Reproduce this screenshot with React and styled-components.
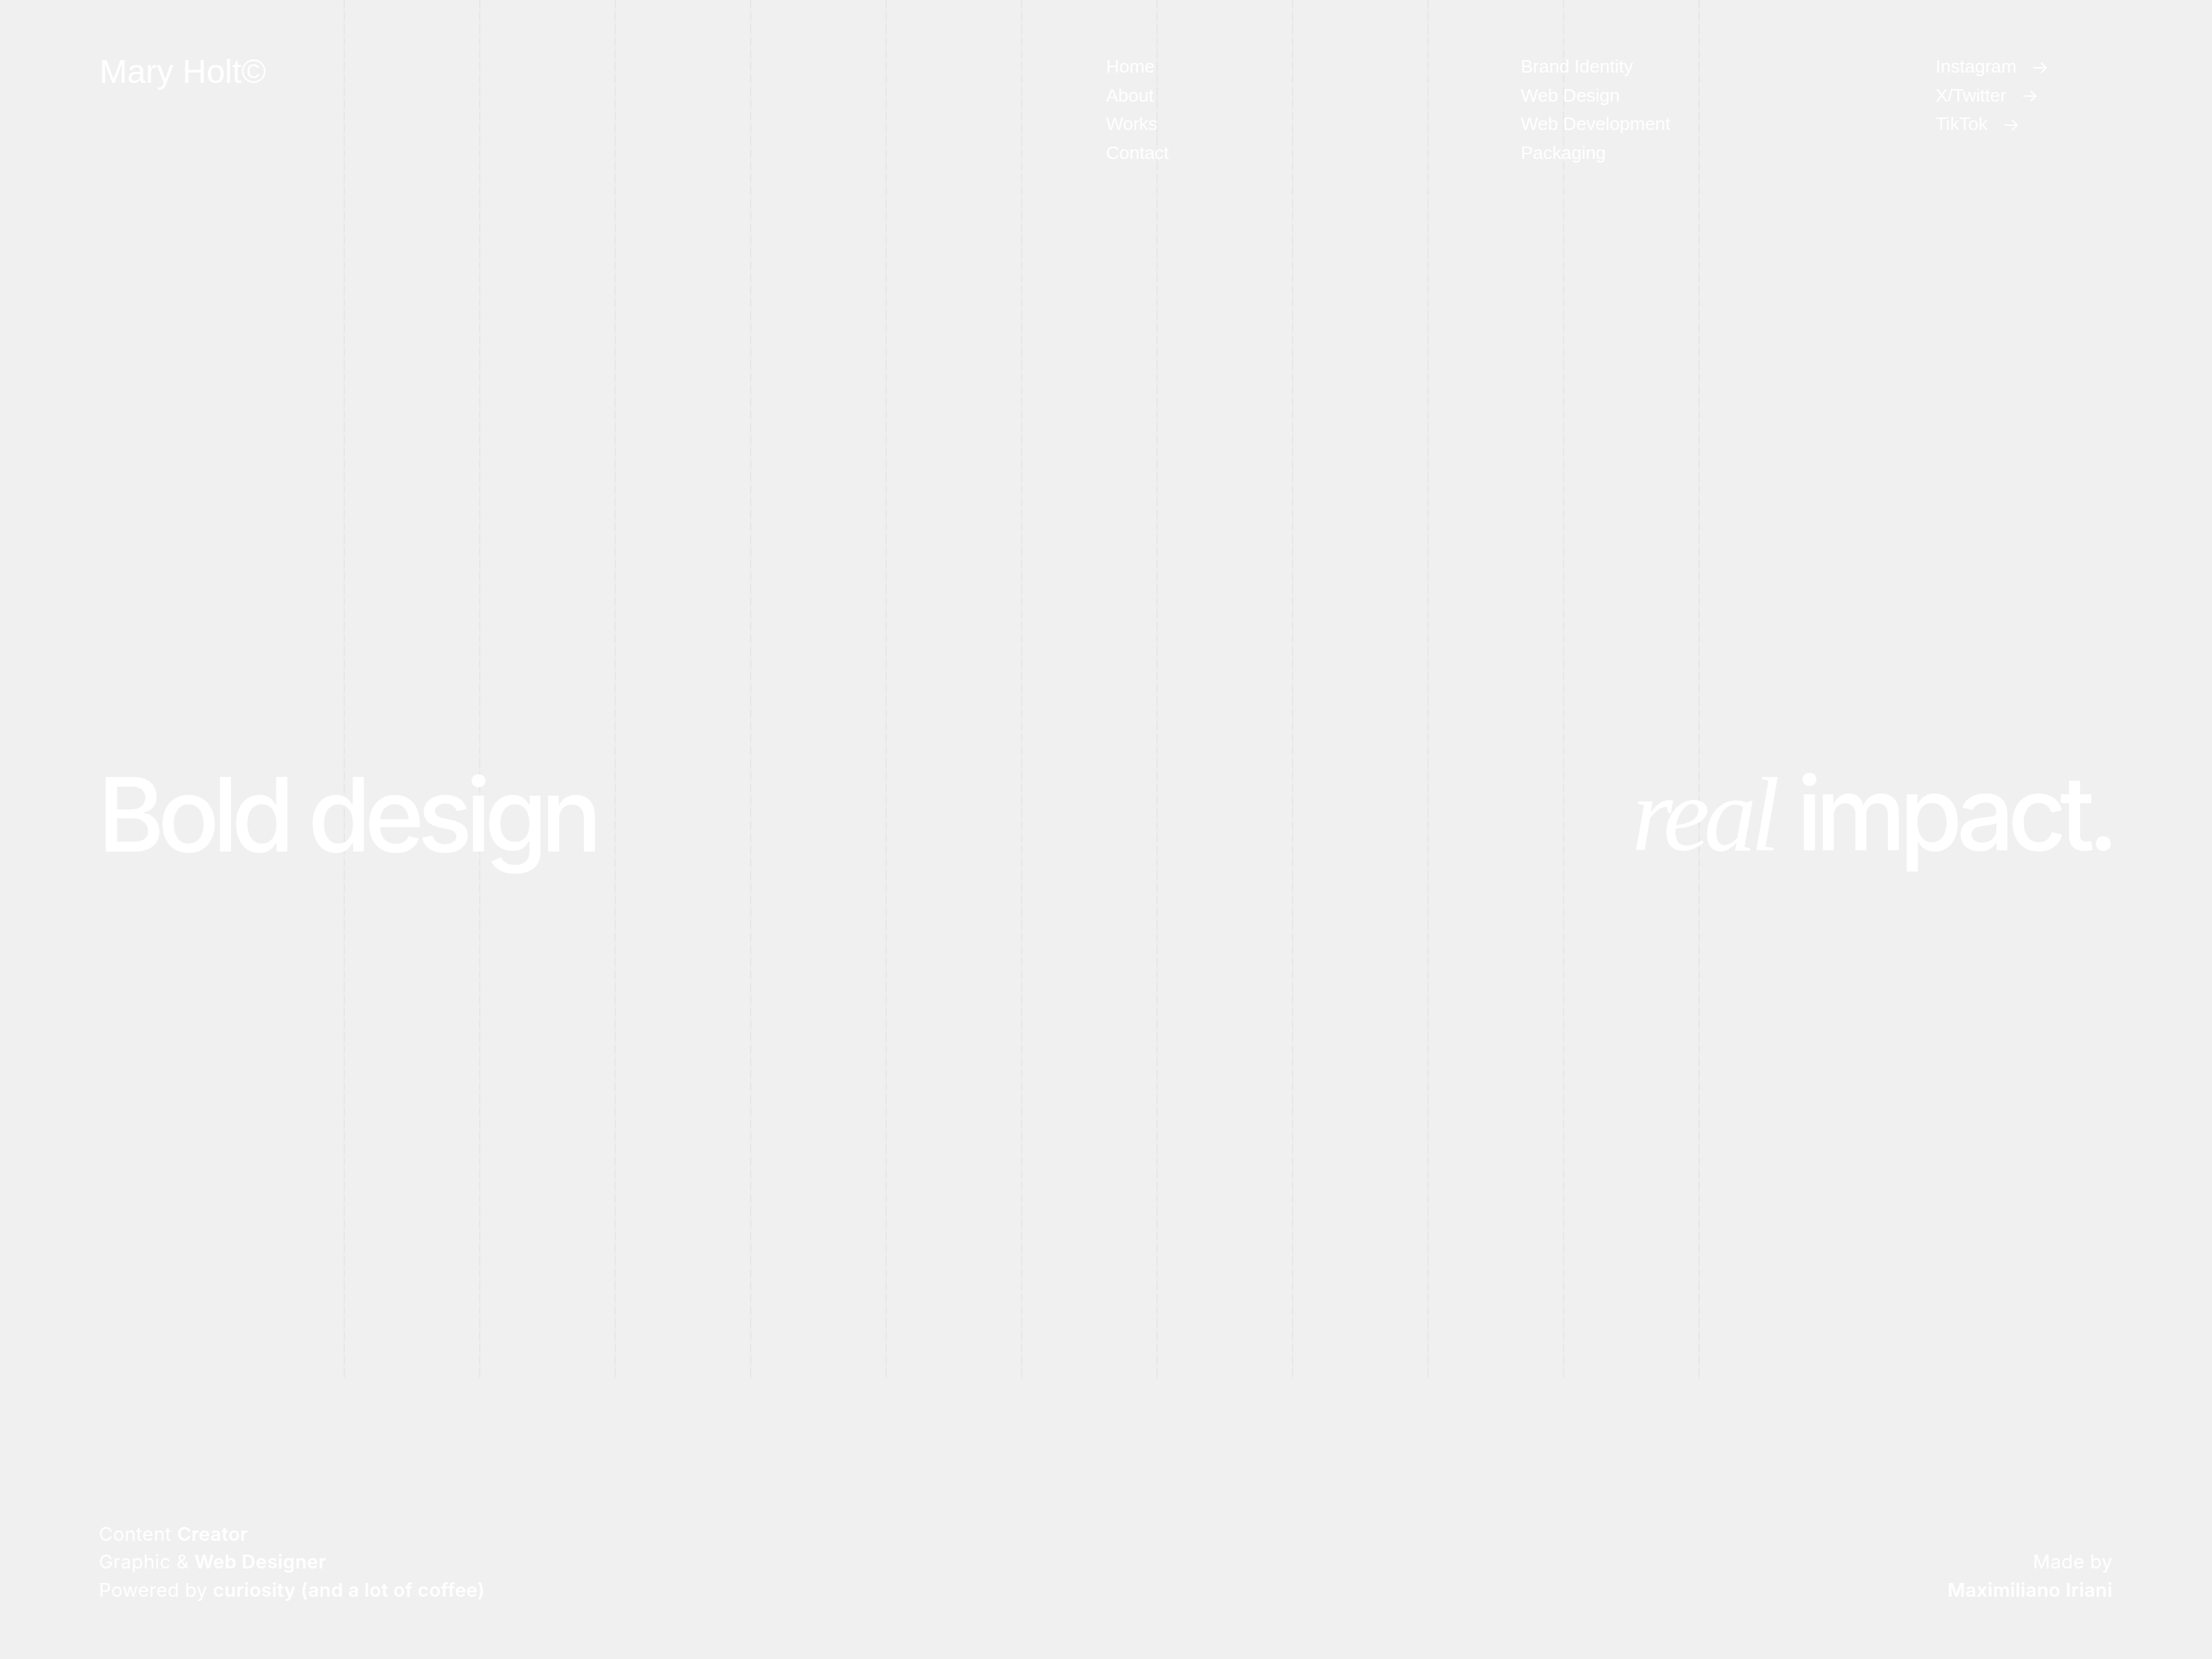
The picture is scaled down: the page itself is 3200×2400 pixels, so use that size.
import React from "react";
import styled, { createGlobalStyle } from "styled-components";

const GlobalStyle = createGlobalStyle`
  html, body { margin: 0; padding: 0; background: #f0f0f0; }
  body { font-family: "Liberation Sans", Arial, sans-serif; }
  * { box-sizing: border-box; }
`;

const Page = styled.div`
  position: relative;
  min-height: 100vh;
  display: flex;
  flex-direction: column;
  background: #f0f0f0;
  color: #ffffff;
  overflow: hidden;
`;

const GridLines = styled.div`
  position: absolute;
  top: 0;
  left: 497px;
  height: 1995px;
  display: flex;
  gap: 194px;
  pointer-events: none;
  z-index: 0;
`;

const Line = styled.span`
  display: block;
  width: 2px;
  height: 100%;
  background: repeating-linear-gradient(
    to bottom,
    #e7e7e7 0px,
    #e7e7e7 12px,
    #ededed 12px,
    #ededed 18px
  );
`;

const Header = styled.header`
  position: relative;
  z-index: 1;
  display: grid;
  grid-template-columns: 1456px 600px 600px 1fr;
  padding: 76px 144px 0;
`;

const Logo = styled.div`
  margin-top: 4px;
  font-family: "Liberation Sans", Arial, sans-serif;
  font-size: 48px;
  line-height: 1;
`;

const LinkList = styled.ul`
  list-style: none;
  margin: 0;
  padding: 0;
  display: flex;
  flex-direction: column;
`;

const LinkItem = styled.li`
  display: flex;
  align-items: center;
  gap: 24px;
  font-family: "Liberation Sans", Arial, sans-serif;
  font-size: 26.6px;
  line-height: 41.5px;
  letter-spacing: -0.005em;
  white-space: nowrap;
`;

const Arrow = styled.svg`
  width: 21px;
  height: 18px;
  flex: none;
  margin-top: 2px;
`;

const Hero = styled.main`
  position: relative;
  z-index: 1;
  flex: 1;
  display: flex;
  align-items: center;
  justify-content: space-between;
  padding: 0 145px 82px 141px;
`;

const HeroText = styled.h1`
  margin: 0;
  font-family: "Inter", "Liberation Sans", sans-serif;
  font-weight: 500;
  font-size: 148px;
  line-height: 1;
  letter-spacing: -0.068em;
  white-space: nowrap;
`;

const SerifWord = styled.em`
  font-family: "Liberation Serif", "Times New Roman", serif;
  font-style: italic;
  font-weight: 400;
  font-size: 152px;
  letter-spacing: -0.055em;
  margin-right: 0.02em;
`;

const Footer = styled.footer`
  position: relative;
  z-index: 1;
  display: flex;
  justify-content: space-between;
  align-items: flex-end;
  padding: 0 144px 80px 143px;
`;

const FooterBlock = styled.div`
  display: flex;
  flex-direction: column;
  align-items: ${(p) => (p.$right ? "flex-end" : "flex-start")};
  text-align: ${(p) => (p.$right ? "right" : "left")};
`;

const FooterLine = styled.div`
  font-family: "Inter", "Liberation Sans", sans-serif;
  font-size: 27.5px;
  line-height: 40.5px;
  font-weight: 400;
  letter-spacing: 0.012em;
  white-space: nowrap;
`;

const Strong = styled.span`
  font-weight: 600;
`;

const ArrowIcon = () => (
  <Arrow viewBox="0 0 21 18" fill="none" stroke="#ffffff" strokeWidth="1.8" strokeLinecap="round" strokeLinejoin="round">
    <path d="M1.5 9H19" />
    <path d="M12 2L19 9L12 16" />
  </Arrow>
);

const nav = ["Home", "About", "Works", "Contact"];
const services = ["Brand Identity", "Web Design", "Web Development", "Packaging"];
const socials = ["Instagram", "X/Twitter", "TikTok"];

export default function App() {
  return (
    <>
      <GlobalStyle />
      <Page>
        <GridLines aria-hidden="true">
          {Array.from({ length: 11 }).map((_, i) => (
            <Line key={i} />
          ))}
        </GridLines>

        <Header>
          <Logo>Mary Holt©</Logo>
          <LinkList>
            {nav.map((n) => (
              <LinkItem key={n}>{n}</LinkItem>
            ))}
          </LinkList>
          <LinkList>
            {services.map((n) => (
              <LinkItem key={n}>{n}</LinkItem>
            ))}
          </LinkList>
          <LinkList>
            {socials.map((n) => (
              <LinkItem key={n}>
                {n}
                <ArrowIcon />
              </LinkItem>
            ))}
          </LinkList>
        </Header>

        <Hero>
          <HeroText>Bold design</HeroText>
          <HeroText>
            <SerifWord>real</SerifWord> impact.
          </HeroText>
        </Hero>

        <Footer>
          <FooterBlock>
            <FooterLine>
              Content <Strong>Creator</Strong>
            </FooterLine>
            <FooterLine>
              Graphic &amp; <Strong>Web Designer</Strong>
            </FooterLine>
            <FooterLine>
              Powered by <Strong>curiosity (and a lot of coffee)</Strong>
            </FooterLine>
          </FooterBlock>
          <FooterBlock $right>
            <FooterLine>Made by</FooterLine>
            <FooterLine>
              <Strong>Maximiliano Iriani</Strong>
            </FooterLine>
          </FooterBlock>
        </Footer>
      </Page>
    </>
  );
}
